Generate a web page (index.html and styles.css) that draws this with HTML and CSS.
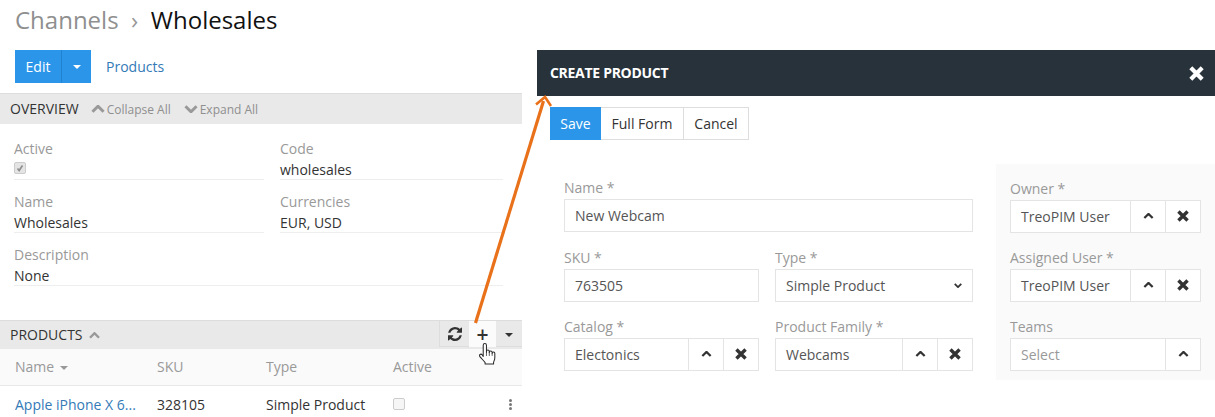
FILE: index.html
```html
<!DOCTYPE html>
<html lang="en">
<head>
    <meta charset="UTF-8">
    <title>Channels - Wholesales</title>
    <link rel="stylesheet" href="styles.css">
</head>
<body>
    <svg class="defs" width="0" height="0">
        <symbol id="chev-up" viewBox="0.5 1 11 6.5"><path d="M1.500 6.500 6 2l4.500 4.500" fill="none" stroke="currentColor" stroke-width="2.400"/></symbol>
        <symbol id="chev-down" viewBox="0.5 0.5 11 6.500"><path d="M1.500 1.500 6 6l4.500-4.500" fill="none" stroke="currentColor" stroke-width="2.400"/></symbol>
        <symbol id="cross" viewBox="1 1 10 10"><path d="M2.200 2.200l7.600 7.600M9.800 2.200l-7.600 7.600" fill="none" stroke="currentColor" stroke-width="2.800"/></symbol>
        <symbol id="refresh" viewBox="0 0 1536 1536"><path fill="currentColor" d="M1511 928q0 5-1 7-64 268-268 434.500t-478 166.500q-146 0-282.500-55t-243.500-157l-129 129q-19 19-45 19t-45-19-19-45v-448q0-26 19-45t45-19h448q26 0 45 19t19 45-19 45l-137 137q71 66 161 102t187 36q134 0 250-65t186-179q11-17 53-117 8-23 30-23h192q13 0 22.500 9.500t9.500 22.500zm25-800v448q0 26-19 45t-45 19h-448q-26 0-45-19t-19-45 19-45l138-138q-148-137-349-137-134 0-250 65t-186 179q-11 17-53 117-8 23-30 23h-199q-13 0-22.500-9.500t-9.500-22.500v-7q65-268 270-434.500t480-166.500q146 0 284 55.500t245 156.500l130-129q19-19 45-19t45 19 19 45z"/></symbol>
    </svg>

    <div class="page">
        <div class="detail">
            <h1 class="title"><span class="crumb">Channels</span><span class="sep">›</span>Wholesales</h1>

            <div class="actions">
                <div class="btn-primary">
                    <span class="edit">Edit</span>
                    <span class="edit-more"><i class="caret caret-white"></i></span>
                </div>
                <a class="link products-link">Products</a>
            </div>

            <div class="panel-head overview-head">
                <span class="panel-title">OVERVIEW</span>
                <span class="toggle toggle-collapse"><svg class="toggle-icon"><use href="#chev-up"/></svg>Collapse All</span>
                <span class="toggle toggle-expand"><svg class="toggle-icon"><use href="#chev-down"/></svg>Expand All</span>
            </div>

            <div class="fields">
                <div class="field">
                    <div class="field-label">Active</div>
                    <div class="field-value"><span class="check check-on"><svg viewBox="0 0 12 12"><path d="M3 6.500 5 9l4-6" fill="none" stroke="#8f8f8f" stroke-width="2"/></svg></span></div>
                </div>
                <div class="field">
                    <div class="field-label">Code</div>
                    <div class="field-value">wholesales</div>
                </div>
                <div class="field">
                    <div class="field-label">Name</div>
                    <div class="field-value">Wholesales</div>
                </div>
                <div class="field">
                    <div class="field-label">Currencies</div>
                    <div class="field-value">EUR, USD</div>
                </div>
                <div class="field field-wide">
                    <div class="field-label">Description</div>
                    <div class="field-value">None</div>
                </div>
            </div>

            <div class="panel-head products-head">
                <span class="panel-title">PRODUCTS</span>
                <svg class="products-chev"><use href="#chev-up"/></svg>
                <div class="panel-tools">
                    <span class="tool tool-refresh"><svg class="refresh-icon"><use href="#refresh"/></svg></span>
                    <span class="tool tool-add">+</span>
                    <span class="tool tool-more"><i class="caret caret-dark"></i></span>
                </div>
            </div>

            <div class="list-row list-header">
                <span class="col-name">Name <i class="caret caret-grey"></i></span>
                <span class="col-sku">SKU</span>
                <span class="col-type">Type</span>
                <span class="col-active">Active</span>
            </div>
            <div class="list-row list-item">
                <a class="link col-name">Apple iPhone X 6...</a>
                <span class="col-sku">328105</span>
                <span class="col-type">Simple Product</span>
                <span class="col-active"><span class="check"></span></span>
                <span class="dots"><i></i><i></i><i></i></span>
            </div>
        </div>

        <div class="modal">
            <div class="modal-head">
                <span class="modal-title">CREATE PRODUCT</span>
                <svg class="modal-close"><use href="#cross"/></svg>
            </div>
            <div class="modal-buttons">
                <span class="mbtn mbtn-save">Save</span>
                <span class="mbtn mbtn-full">Full Form</span>
                <span class="mbtn mbtn-cancel">Cancel</span>
            </div>
            <div class="modal-body">
                <div class="form-main">
                    <div class="form-item form-item-wide">
                        <label>Name *</label>
                        <div class="box">New Webcam</div>
                    </div>
                    <div class="form-item">
                        <label>SKU *</label>
                        <div class="box">763505</div>
                    </div>
                    <div class="form-item">
                        <label>Type *</label>
                        <div class="box box-select">Simple Product<svg class="select-icon"><use href="#chev-down"/></svg></div>
                    </div>
                    <div class="form-item">
                        <label>Catalog *</label>
                        <div class="combo">
                            <div class="combo-text">Electonics</div>
                            <span class="combo-btn"><svg class="up-icon"><use href="#chev-up"/></svg></span>
                            <span class="combo-btn"><svg class="x-icon"><use href="#cross"/></svg></span>
                        </div>
                    </div>
                    <div class="form-item">
                        <label>Product Family *</label>
                        <div class="combo">
                            <div class="combo-text">Webcams</div>
                            <span class="combo-btn"><svg class="up-icon"><use href="#chev-up"/></svg></span>
                            <span class="combo-btn"><svg class="x-icon"><use href="#cross"/></svg></span>
                        </div>
                    </div>
                </div>
                <div class="form-side">
                    <div class="form-item">
                        <label>Owner *</label>
                        <div class="combo">
                            <div class="combo-text">TreoPIM User</div>
                            <span class="combo-btn"><svg class="up-icon"><use href="#chev-up"/></svg></span>
                            <span class="combo-btn"><svg class="x-icon"><use href="#cross"/></svg></span>
                        </div>
                    </div>
                    <div class="form-item">
                        <label>Assigned User *</label>
                        <div class="combo">
                            <div class="combo-text">TreoPIM User</div>
                            <span class="combo-btn"><svg class="up-icon"><use href="#chev-up"/></svg></span>
                            <span class="combo-btn"><svg class="x-icon"><use href="#cross"/></svg></span>
                        </div>
                    </div>
                    <div class="form-item">
                        <label>Teams</label>
                        <div class="combo">
                            <div class="combo-text placeholder">Select</div>
                            <span class="combo-btn"><svg class="up-icon"><use href="#chev-up"/></svg></span>
                        </div>
                    </div>
                </div>
            </div>
        </div>
    </div>

    <!-- annotation drawn over the screenshot -->
    <svg class="arrow" viewBox="0 0 1215 417">
        <path d="M475.500 323 543.500 101" fill="none" stroke="#e8711a" stroke-width="3.200"/>
        <path d="M536 104.500 545 97 551 106" fill="none" stroke="#e8711a" stroke-width="2.600"/>
    </svg>

    <svg class="hand" viewBox="0 0 20 26">
        <path d="M5.500 15V3.200a1.700 1.700 0 0 1 3.400 0V10.500V9.800a1.500 1.500 0 0 1 3 0v1a1.500 1.500 0 0 1 3 0v1a1.400 1.400 0 0 1 2.800 0v4.700c0 2-.6 3-1.300 4.500v2H7.500v-1.500C6 19.500 3.800 17.500 2.200 15.500c-1.700-2.200.8-3.800 2.300-2z" fill="#fff" stroke="#2b2b2b" stroke-width="1.100" stroke-linejoin="round"/>
        <path d="M8.900 10v4.500M11.900 10.500v4M14.900 11.500v3" stroke="#2b2b2b" stroke-width=".8"/>
    </svg>
</body>
</html>
```

FILE: styles.css
```css
html, body {
    margin: 0;
    height: 417px;
    overflow: hidden;
    background: #fff;
}
body {
    position: relative;
    font-family: "Open Sans", sans-serif;
    font-size: 14px;
    line-height: 20px;
    color: #333;
}
.defs {
    position: absolute;
}
.page {
    display: flex;
    align-items: flex-start;
}
.link {
    color: #337ab7;
}

/* left side, channel detail */
.detail {
    width: 522px;
    margin-right: 15px;
    flex: none;
}
.title {
    margin: 0;
    padding-left: 15px;
    height: 50px;
    font-size: 24px;
    line-height: 39px;
    font-weight: 400;
    color: #111;
}
.crumb {
    color: #8f8f8f;
}
.sep {
    color: #999;
    margin: 0 12.500px;
}
.actions {
    display: flex;
    align-items: center;
    padding-left: 15px;
    height: 33px;
    margin-bottom: 10px;
}
.btn-primary {
    display: flex;
    height: 33px;
    background: #2b96e9;
    color: #fff;
    line-height: 33px;
}
.edit {
    width: 46px;
    text-align: center;
    border-right: 1px solid #2183d0;
}
.edit-more {
    width: 29px;
    display: flex;
    align-items: center;
    justify-content: center;
}
.products-link {
    margin-left: 15px;
}
.caret {
    display: inline-block;
    width: 0;
    height: 0;
    border-left: 4px solid transparent;
    border-right: 4px solid transparent;
    border-top: 4px solid #fff;
}
.caret-dark {
    border-top-color: #333;
}
.caret-grey {
    border-top-color: #999;
    vertical-align: 2px;
    margin-left: 2px;
}
.panel-head {
    display: flex;
    align-items: center;
    background: #e9e9e9;
    border-top: 1px solid #ddd;
    padding-left: 10px;
}
.overview-head {
    height: 30px;
}
.panel-title {
    color: #333;
}
.toggle {
    display: flex;
    align-items: center;
    font-size: 12px;
    color: #8f8f8f;
    padding-top: 2px;
}
.toggle-collapse {
    margin-left: 12px;
}
.toggle-expand {
    margin-left: 13px;
}
.toggle-icon {
    width: 14px;
    height: 8px;
    color: #999;
    margin: -3px 2px 0 0;
}

.fields {
    display: grid;
    grid-template-columns: 250px 223px;
    column-gap: 16px;
    row-gap: 12px;
    padding: 15px 0 0 14px;
    height: 196px;
    box-sizing: border-box;
    align-content: start;
}
.field {
    height: 40px;
    border-bottom: 1px solid #eee;
}
.field-wide {
    grid-column: 1 / 3;
}
.field-label {
    color: #999;
    line-height: 20px;
}
.field-value {
    color: #333;
    line-height: 18px;
    margin-top: 2px;
}
.check {
    display: inline-block;
    width: 10px;
    height: 10px;
    border: 1px solid #ccc;
    border-radius: 2px;
    background: #f6f6f6;
    vertical-align: top;
    margin-top: 1px;
}
.check-on {
    background: #e4e4e4;
}
.check-on svg {
    display: block;
    width: 10px;
    height: 10px;
}

.products-head {
    height: 28px;
    align-items: stretch;
}
.products-head .panel-title {
    line-height: 28px;
}
.products-chev {
    width: 11px;
    height: 7px;
    color: #999;
    margin: 11px 0 0 6px;
}
.panel-tools {
    display: flex;
    margin-left: auto;
    height: 26px;
}
.tool {
    display: flex;
    align-items: center;
    justify-content: center;
    box-sizing: border-box;
}
.tool-refresh {
    width: 30px;
    border: 1px solid #ddd;
    border-width: 0 0 1px 1px;
}
.refresh-icon {
    width: 14px;
    height: 14px;
    color: #333;
}
.tool-add {
    width: 27px;
    padding-bottom: 1px;
    background: #fbfbfb;
    font-size: 21px;
    font-weight: 600;
}
.tool-more {
    width: 26px;
    padding-top: 2px;
    border-bottom: 1px solid #ddd;
}
.list-row {
    display: flex;
    align-items: center;
    padding-left: 15px;
}
.list-header {
    height: 36px;
    background: #fafafa;
    border-bottom: 1px solid #e8e8e8;
    color: #999;
}
.list-item {
    height: 31px;
    box-sizing: border-box;
    padding-top: 6px;
}
.col-name {
    width: 142px;
}
.col-sku {
    width: 109px;
}
.col-type {
    width: 127px;
}
.col-active .check {
    display: block;
    margin-top: -2px;
}
.dots {
    display: flex;
    flex-direction: column;
    gap: 1px;
    margin-left: auto;
    margin-right: 10px;
}
.dots i {
    width: 3px;
    height: 3px;
    border-radius: 50%;
    background: #777;
}

/* right side, create product modal */
.modal {
    flex: 1;
    margin-top: 50px;
}
.modal-head {
    display: flex;
    align-items: center;
    justify-content: space-between;
    height: 46px;
    padding: 0 11px 0 13px;
    background: #27323a;
    color: #fff;
}
.modal-title {
    font-weight: 700;
    letter-spacing: -.3px;
    margin-bottom: 1px;
}
.modal-close {
    width: 15px;
    height: 15px;
    color: #fff;
}
.modal-buttons {
    display: flex;
    margin: 11px 0 0 13px;
    height: 33px;
}
.mbtn {
    box-sizing: border-box;
    line-height: 31px;
    text-align: center;
    border: 1px solid #ddd;
    border-left: 0;
}
.mbtn-save {
    width: 51px;
    line-height: 33px;
    background: #2b96e9;
    border: 0;
    color: #fff;
}
.mbtn-full {
    width: 83px;
}
.mbtn-cancel {
    width: 65px;
}
.modal-body {
    display: flex;
    margin-top: 24px;
}
.form-main {
    display: grid;
    grid-template-columns: 195px 198px;
    column-gap: 16px;
    row-gap: 15px;
    width: 409px;
    padding: 14px 0 0 27px;
    align-content: start;
}
.form-item-wide {
    grid-column: 1 / 3;
    margin-bottom: 1px;
}
.form-side {
    display: flex;
    flex-direction: column;
    gap: 15px;
    width: 219px;
    height: 216px;
    box-sizing: border-box;
    margin-left: 23px;
    padding: 15px 14px 0;
    background: #fafafa;
}
.form-item {
    min-width: 0;
}
label {
    display: block;
    color: #999;
    line-height: 20px;
    margin-bottom: 1px;
}
.box {
    box-sizing: border-box;
    height: 33px;
    padding: 0 10px;
    line-height: 31px;
    border: 1px solid #e4e4e4;
    background: #fff;
    color: #555;
}
.box-select {
    display: flex;
    align-items: center;
    justify-content: space-between;
}
.select-icon {
    width: 8px;
    height: 5px;
    color: #333;
}
.combo {
    display: flex;
    box-sizing: border-box;
    height: 33px;
    border: 1px solid #e4e4e4;
    background: #fff;
}
.combo-text {
    flex: 1;
    min-width: 0;
    padding: 0 10px;
    line-height: 31px;
    color: #555;
}
.placeholder {
    color: #999;
}
.combo-btn {
    display: flex;
    align-items: center;
    justify-content: center;
    box-sizing: border-box;
    width: 35px;
    border-left: 1px solid #e4e4e4;
    color: #333;
}
.up-icon {
    width: 11px;
    height: 6px;
    margin-top: -1px;
}
.x-icon {
    width: 12px;
    height: 12px;
    margin-top: -1px;
}

/* annotation */
.arrow {
    position: absolute;
    left: 0;
    top: 0;
    width: 1215px;
    height: 417px;
    pointer-events: none;
}
.hand {
    position: absolute;
    left: 478px;
    top: 342px;
    width: 19px;
    height: 25px;
}
```
